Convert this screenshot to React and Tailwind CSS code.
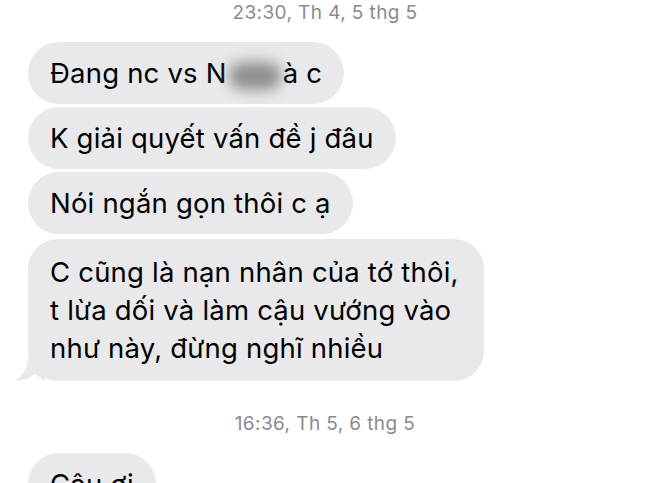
export default function App() {
  const font = { fontFamily: "Inter, Roboto, 'Liberation Sans', sans-serif" };
  return (
    <div className="w-[650px] h-[483px] overflow-hidden bg-white" style={font}>
      <div className="pt-[1px] text-center text-[19px] leading-[24px] tracking-[0.4px] text-[#8a8a8e]">23:30, Th 4, 5 thg 5</div>
      <div className="mt-[17px] pl-[28px] flex flex-col items-start gap-[3px] text-[27.5px] leading-[38px] tracking-[0.2px] text-black">
        <div className="rounded-full bg-[#e9e9eb] px-[22px] py-[12px] whitespace-nowrap">
          Đang nc vs N
          <span className="inline-block w-[52px] h-[28px] align-middle mx-[2px] rounded-full bg-[#8f8f8f] blur-[7px]" />
          à c
        </div>
        <div className="rounded-full bg-[#e9e9eb] px-[22px] py-[12px] whitespace-nowrap">K giải quyết vấn đề j đâu</div>
        <div className="rounded-full bg-[#e9e9eb] px-[22px] py-[12px] whitespace-nowrap">Nói ngắn gọn thôi c ạ</div>
        <div className="relative mt-[2px] w-[456px] rounded-[30px] bg-[#e9e9eb] pl-[22px] pr-[20px] py-[14px] whitespace-nowrap">
          C cũng là nạn nhân của tớ thôi,
          <br />
          t lừa dối và làm cậu vướng vào
          <br />
          như này, đừng nghĩ nhiều
          <svg className="absolute left-[-13px] bottom-0" width="30" height="24" viewBox="0 0 30 24">
            <path d="M13 0 C13 10 9 18 0 23.5 C8 24 15 21 20 17 L30 24 L30 0 Z" fill="#e9e9eb" />
          </svg>
        </div>
      </div>
      <div className="mt-[31px] text-center text-[19px] leading-[24px] tracking-[0.4px] text-[#8a8a8e]">16:36, Th 5, 6 thg 5</div>
      <div className="mt-[17px] pl-[28px] flex flex-col items-start text-[27.5px] leading-[38px] tracking-[0.2px] text-black">
        <div className="rounded-full bg-[#e9e9eb] px-[22px] py-[12px] whitespace-nowrap">Câu ơi</div>
      </div>
    </div>
  );
}
